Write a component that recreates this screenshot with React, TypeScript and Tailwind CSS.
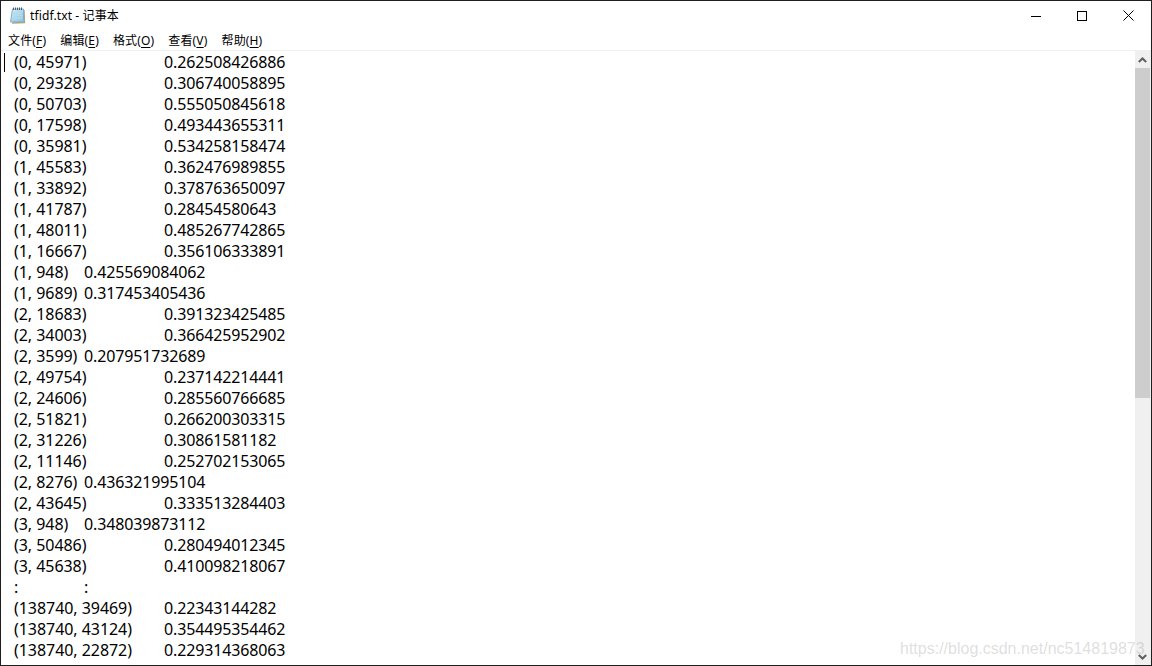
const rows: [string, string][] = [
  ["(0, 45971)", "0.262508426886"],
  ["(0, 29328)", "0.306740058895"],
  ["(0, 50703)", "0.555050845618"],
  ["(0, 17598)", "0.493443655311"],
  ["(0, 35981)", "0.534258158474"],
  ["(1, 45583)", "0.362476989855"],
  ["(1, 33892)", "0.378763650097"],
  ["(1, 41787)", "0.28454580643"],
  ["(1, 48011)", "0.485267742865"],
  ["(1, 16667)", "0.356106333891"],
  ["(1, 948)", "0.425569084062"],
  ["(1, 9689)", "0.317453405436"],
  ["(2, 18683)", "0.391323425485"],
  ["(2, 34003)", "0.366425952902"],
  ["(2, 3599)", "0.207951732689"],
  ["(2, 49754)", "0.237142214441"],
  ["(2, 24606)", "0.285560766685"],
  ["(2, 51821)", "0.266200303315"],
  ["(2, 31226)", "0.30861581182"],
  ["(2, 11146)", "0.252702153065"],
  ["(2, 8276)", "0.436321995104"],
  ["(2, 43645)", "0.333513284403"],
  ["(3, 948)", "0.348039873112"],
  ["(3, 50486)", "0.280494012345"],
  ["(3, 45638)", "0.410098218067"],
  [":", ":"],
  ["(138740, 39469)", "0.22343144282"],
  ["(138740, 43124)", "0.354495354462"],
  ["(138740, 22872)", "0.229314368063"],
];

const shortLabels = new Set(["(1, 948)", "(1, 9689)", "(2, 3599)", "(2, 8276)", "(3, 948)", ":"]);
const menus: [string, string][] = [
  ["文件", "F"],
  ["编辑", "E"],
  ["格式", "O"],
  ["查看", "V"],
  ["帮助", "H"],
];
const uiFont = "font-['Noto_Sans','Noto_Sans_CJK_SC',sans-serif]";

function NotepadIcon() {
  return (
    <svg width="17" height="17" viewBox="0 0 17 17" className="shrink-0">
      <defs>
        <linearGradient id="pad" x1="0" y1="0" x2="1" y2="1">
          <stop offset="0" stopColor="#d4edf7" />
          <stop offset="1" stopColor="#8cc3de" />
        </linearGradient>
      </defs>
      <path d="M15 3 L15.5 15.5 L3 16" fill="none" stroke="#b0a27c" strokeWidth="1.4" />
      <path d="M3.5 2 L14.5 2 L14.5 14.5 L1.5 15 Z" fill="url(#pad)" stroke="#7fb2cc" strokeWidth="1" />
      <path d="M4 6h9M3.7 8.5h9.5M3.3 11h10" stroke="#b5dcec" strokeWidth="1" />
      <path d="M4.5 .5v2.5M6.5 .5v2.5M8.5 .5v2.5M10.5 .5v2.5M12.5 .5v2.5" stroke="#4a5a68" strokeWidth="1" />
    </svg>
  );
}

export default function App() {
  return (
    <div className={`${uiFont} w-[1152px] h-[666px] overflow-hidden bg-white border border-[#1f1f1f] flex flex-col relative text-black`}>
      <div className="h-[29px] shrink-0 flex items-center">
        <div className="ml-[8px] mr-[4px] flex"><NotepadIcon /></div>
        <span className="text-[12px] tracking-[0.12px]">tfidf.txt - 记事本</span>
        <div className="ml-auto flex items-center h-full">
          <div className="w-[46px] flex justify-center">
            <svg width="10" height="10" viewBox="0 0 10 10"><path d="M0 5.5h10" stroke="#000" strokeWidth="1" /></svg>
          </div>
          <div className="w-[46px] flex justify-center">
            <svg width="10" height="10" viewBox="0 0 10 10"><rect x=".5" y=".5" width="9" height="9" fill="none" stroke="#000" /></svg>
          </div>
          <div className="w-[46px] flex justify-center">
            <svg width="11" height="11" viewBox="0 0 11 11"><path d="M.5.5l10 10M10.5.5l-10 10" stroke="#000" strokeWidth="1" /></svg>
          </div>
        </div>
      </div>
      <div className="h-[20px] shrink-0 flex items-center text-[12px] tracking-[0.15px] pl-[7px] pt-[2px] gap-[14px]">
        {menus.map(([name, key]) => (
          <span key={key}>
            {name}(<span className="underline underline-offset-2">{key}</span>)
          </span>
        ))}
      </div>
      <div className="h-[1px] shrink-0 bg-[#f0f0f0]" />
      <div className="flex-1 flex min-h-0">
        <div className="flex-1 relative overflow-hidden pl-[13px] pt-[1px] text-[16px] leading-[21px] whitespace-pre">
          <div className="absolute left-[3px] top-[2px] w-[1px] h-[19px] bg-black" />
          {rows.map(([a, b], i) => (
            <div key={i} className="flex h-[21px]">
              <span className={shortLabels.has(a) ? "w-[70px] shrink-0 tracking-[-0.05px]" : "w-[150px] shrink-0 tracking-[-0.05px]"}>{a}</span>
              <span className="tracking-[-0.15px]">{b}</span>
            </div>
          ))}
        </div>
        <div className="w-[16px] shrink-0 bg-[#f0f0f0] flex flex-col">
          <div className="h-[17px] shrink-0 flex items-center justify-center pr-[1px]">
            <svg width="9" height="6" viewBox="0 0 9 6"><path d="M.8 5L4.5 1.5 8.2 5" fill="none" stroke="#606060" strokeWidth="2" /></svg>
          </div>
          <div className="h-[330px] w-[15px] bg-[#cdcdcd]" />
          <div className="mt-auto h-[17px] shrink-0 flex items-center justify-center pr-[1px]">
            <svg width="9" height="6" viewBox="0 0 9 6"><path d="M.8 1L4.5 4.5 8.2 1" fill="none" stroke="#606060" strokeWidth="2" /></svg>
          </div>
        </div>
      </div>
      <div className="absolute left-[899px] top-[638px] text-[16px] leading-[20px] text-[#a0a0a0]/35 whitespace-nowrap font-['Liberation_Sans',sans-serif]">
        https://blog.csdn.net/nc514819873
      </div>
    </div>
  );
}
